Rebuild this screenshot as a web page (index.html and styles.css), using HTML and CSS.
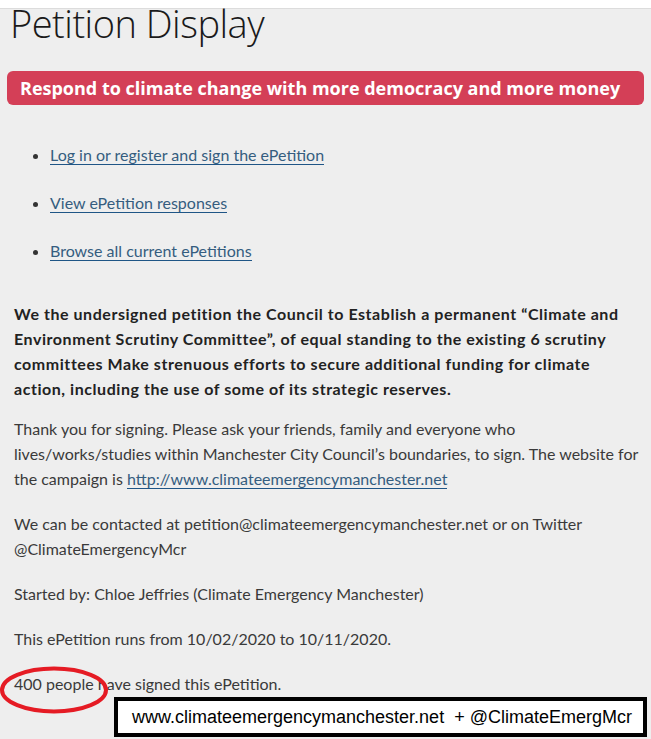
FILE: index.html
```html
<!DOCTYPE html>
<html lang="en">
<head>
<meta charset="utf-8">
<title>Petition Display</title>
<link rel="stylesheet" href="styles.css">
</head>
<body>
<div class="topbar"></div>
<main class="content">
  <h1 class="title">Petition Display</h1>
  <h2 class="banner">Respond to climate change with more democracy and more money</h2>
  <ul class="actions">
    <li><a href="#">Log in or register and sign the ePetition</a></li>
    <li><a href="#">View ePetition responses</a></li>
    <li><a href="#">Browse all current ePetitions</a></li>
  </ul>
  <p class="prayer">We the undersigned petition the Council to Establish a permanent “Climate and Environment Scrutiny Committee”, of equal standing to the existing 6 scrutiny committees Make strenuous efforts to secure additional funding for climate action, including the use of some of its strategic reserves.</p>
  <p class="text">Thank you for signing. Please ask your friends, family and everyone who lives/works/studies within Manchester City Council’s boundaries, to sign. The website for the campaign is <a href="#">http://www.climateemergencymanchester.net</a></p>
  <p class="text">We can be contacted at petition@climateemergencymanchester.net or on Twitter @ClimateEmergencyMcr</p>
  <p class="text">Started by: Chloe Jeffries (Climate Emergency Manchester)</p>
  <p class="text">This ePetition runs from 10/02/2020 to 10/11/2020.</p>
  <p class="text">400 people have signed this ePetition.</p>
</main>
<svg class="circle" width="112" height="50" viewBox="0 0 112 50"><ellipse cx="56" cy="25" rx="52" ry="21.5" fill="none" stroke="#e51b24" stroke-width="4"/></svg>
<div class="caption">www.climateemergencymanchester.net&nbsp; + @ClimateEmergMcr</div>
</body>
</html>
```
FILE: styles.css
```css
html, body {
  margin: 0;
  padding: 0;
}
body {
  background: #eeeeee;
  font-family: Lato, "Open Sans", sans-serif;
  color: #333333;
  position: relative;
  min-height: 739px;
  overflow: hidden;
}
.topbar {
  height: 8px;
  background: #ffffff;
  border-bottom: 1px solid #dcdcdc;
}
.content {
  padding: 0 7px 0 10px;
}
.title {
  margin: -9px 0 0;
  font-family: "Open Sans", sans-serif;
  font-weight: 300;
  font-size: 38px;
  line-height: 46px;
  color: #1a1a1a;
  letter-spacing: -0.5px;
}
.banner {
  margin: 25px 0 0 -3px;
  background: #d43f57;
  color: #ffffff;
  border-radius: 6px;
  font-family: "Open Sans", sans-serif;
  font-size: 18px;
  font-weight: 700;
  line-height: 34px;
  height: 34px;
  padding: 0 13px;
}
.actions {
  margin: 39px 0 0;
  padding: 0 0 0 40px;
  font-size: 16px;
  line-height: 22px;
}
.actions li {
  margin-bottom: 26px;
}
.actions a,
.text a {
  color: #355d7f;
  text-decoration: none;
  border-bottom: 1.5px solid #1f5586;
}
.prayer {
  margin: 39px 0 0 4px;
  padding-right: 8px;
  font-weight: 700;
  font-size: 16px;
  letter-spacing: 0.55px;
  line-height: 25px;
  color: #222222;
}
.text {
  margin: 20px 0 0 4px;
  font-size: 16px;
  line-height: 25px;
  color: #3a3a3a;
}
.prayer + .text {
  margin-top: 15px;
}
.circle {
  position: absolute;
  left: -2px;
  top: 665px;
}
.caption {
  position: absolute;
  left: 114px;
  top: 697px;
  width: 511px;
  height: 32px;
  border: 4px solid #000000;
  background: #ffffff;
  font-family: "Liberation Sans", Arial, sans-serif;
  font-size: 18px;
  line-height: 32px;
  color: #000000;
  padding-left: 14px;
  box-sizing: content-box;
}
```
